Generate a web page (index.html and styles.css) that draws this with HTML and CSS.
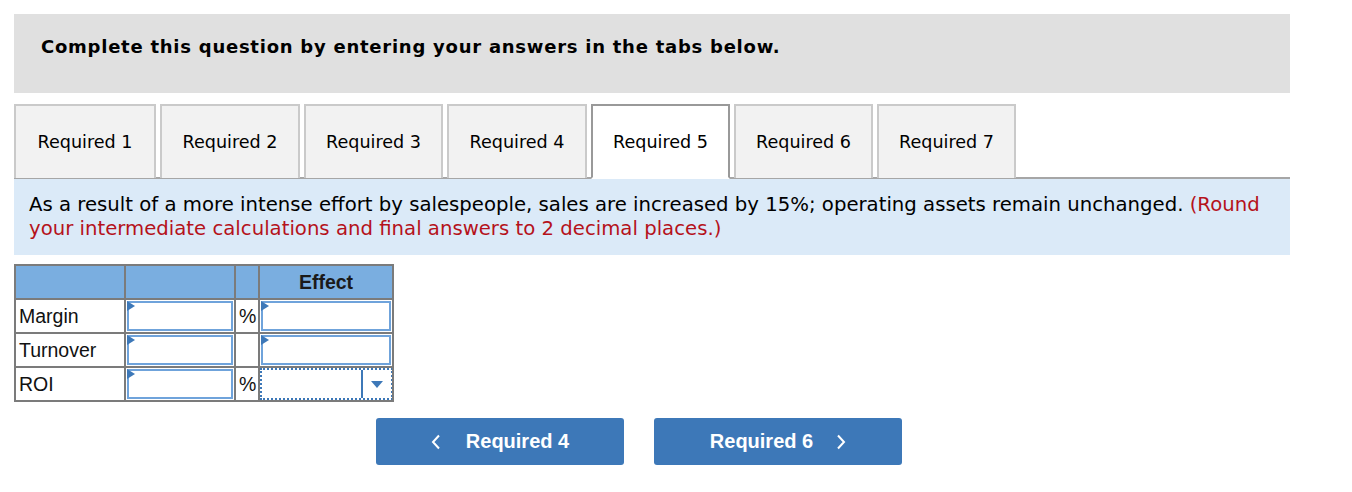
FILE: index.html
```html
<!DOCTYPE html>
<html>
<head>
<meta charset="utf-8">
<link rel="stylesheet" href="styles.css">
</head>
<body>
<div class="page">
  <div class="banner">Complete this question by entering your answers in the tabs below.</div>
  <div class="tabs">
    <div class="tab">Required 1</div>
    <div class="tab">Required 2</div>
    <div class="tab">Required 3</div>
    <div class="tab">Required 4</div>
    <div class="tab active">Required 5</div>
    <div class="tab">Required 6</div>
    <div class="tab">Required 7</div>
  </div>
  <div class="info">As a result of a more intense effort by salespeople, sales are increased by 15%; operating assets remain unchanged. <span class="red">(Round your intermediate calculations and final answers to 2 decimal places.)</span></div>
  <table class="grid">
    <tr class="head">
      <th class="c-label"></th>
      <th class="c-input"></th>
      <th class="c-pct"></th>
      <th class="c-effect">Effect</th>
    </tr>
    <tr>
      <td class="label">Margin</td>
      <td class="cell"><div class="inp"><span class="flag"></span></div></td>
      <td class="pct">%</td>
      <td class="cell"><div class="inp"><span class="flag"></span></div></td>
    </tr>
    <tr>
      <td class="label">Turnover</td>
      <td class="cell"><div class="inp"><span class="flag"></span></div></td>
      <td class="pct"></td>
      <td class="cell"><div class="inp"><span class="flag"></span></div></td>
    </tr>
    <tr>
      <td class="label">ROI</td>
      <td class="cell"><div class="inp"><span class="flag"></span></div></td>
      <td class="pct">%</td>
      <td class="cell sel-cell"><div class="select"><span class="sel-val"></span><span class="sel-arrow"><svg width="12" height="7" viewBox="0 0 12 7"><path d="M0 0H12L6 7Z" fill="#3d78b8"/></svg></span></div></td>
    </tr>
  </table>
  <div class="nav">
    <div class="btn"><svg class="chev" width="10" height="16" viewBox="0 0 10 16"><path d="M8 1.5L2 8L8 14.5" fill="none" stroke="#fff" stroke-width="2"/></svg><span class="btn-text">Required 4</span></div>
    <div class="btn"><span class="btn-text">Required 6</span><svg class="chev chev-r" width="10" height="16" viewBox="0 0 10 16"><path d="M2 1.5L8 8L2 14.5" fill="none" stroke="#fff" stroke-width="2"/></svg></div>
  </div>
</div>
</body>
</html>
```
FILE: styles.css
```css
html, body {
  margin: 0;
  padding: 0;
  background: #fff;
}
.page {
  padding: 14px 62px 0 14px;
  font-family: "DejaVu Sans", Verdana, sans-serif;
  color: #000;
}
.banner {
  background: #e0e0e0;
  height: 79px;
  box-sizing: border-box;
  padding: 21px 0 0 27px;
  font-size: 18px;
  font-weight: bold;
  letter-spacing: 0.75px;
  line-height: 24px;
}
.tabs {
  margin-top: 11px;
  display: flex;
  gap: 4px;
  border-bottom: 2px solid #a6a6a6;
}
.tab {
  width: 139px;
  height: 74px;
  box-sizing: border-box;
  border: 2px solid #cacaca;
  border-bottom: none;
  background: #f2f2f2;
  font-size: 17.6px;
  display: flex;
  align-items: center;
  justify-content: center;
  margin-bottom: -1px;
}
.tab:nth-child(1) { width: 142px; }
.tab:nth-child(2), .tab:nth-child(4) { width: 140px; }
.tab.active {
  background: #fff;
  border-color: #999;
  border-bottom: 2px solid #fff;
  margin-bottom: -2px;
  height: 75px;
  width: 139px;
}
.info {
  background: #dbeaf8;
  padding: 14px 15px 14px 15px;
  font-size: 19.7px;
  line-height: 24px;
}
.red {
  color: #b5121b;
}
.grid {
  margin-top: 9px;
  border-collapse: collapse;
  border: 2px solid #7b7b7b;
  font-family: "Liberation Sans", Arial, sans-serif;
  font-size: 19.5px;
}
.grid th, .grid td {
  border: 2px solid #7b7b7b;
  padding: 0;
}
.head th {
  background: #7aaee0;
  height: 32px;
  font-weight: bold;
  color: #1a1a1a;
  font-size: 19.5px;
}
.c-label { width: 108px; }
.c-input { width: 108px; }
.c-pct { width: 22px; }
.c-effect { width: 132px; }
.grid td {
  height: 30px;
}
.label {
  padding-left: 3px !important;
  color: #111;
  text-align: left;
}
.pct {
  text-align: left;
  padding-left: 3px !important;
  color: #111;
}
.cell {
  padding: 0 !important;
}
.inp {
  position: relative;
  height: 26px;
  margin: 1px 1px 1px 1px;
  border: 2px solid #6fa3db;
  background: #fff;
}
.flag {
  position: absolute;
  left: -2px;
  top: -2px;
  width: 0;
  height: 0;
  border-left: 8px solid #3d78b8;
  border-top: 5px solid transparent;
  border-bottom: 5px solid transparent;
}
.select {
  display: flex;
  height: 28px;
  margin: 0 -1px 0 0;
  border: 2px dotted #3d78b8;
  background: #fff;
}
.sel-val {
  flex: 1;
  border-right: 2px solid #3d78b8;
}
.sel-arrow {
  width: 28px;
  display: flex;
  align-items: center;
  justify-content: center;
}
.nav {
  display: flex;
  gap: 30px;
  margin: 16px 0 0 362px;
}
.btn {
  width: 248px;
  height: 47px;
  background: #3d78b8;
  border-radius: 3px;
  color: #fff;
  display: flex;
  align-items: center;
  justify-content: center;
  font-family: "Liberation Sans", Arial, sans-serif;
  font-weight: bold;
  font-size: 20px;
}
.chev {
  margin-right: 25px;
}
.chev-r {
  margin-right: 0;
  margin-left: 23px;
}
```
